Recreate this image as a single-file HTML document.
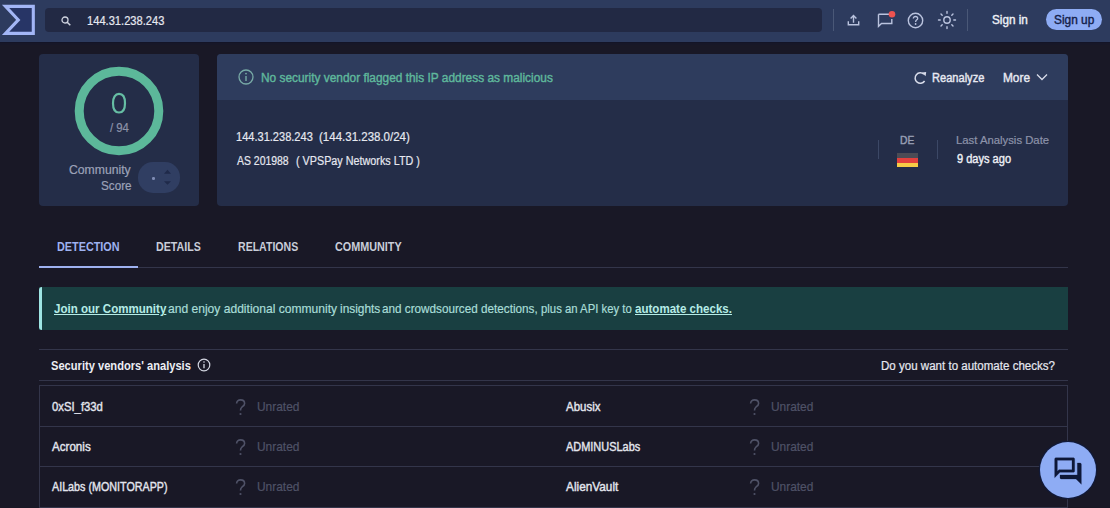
<!DOCTYPE html>
<html><head><meta charset="utf-8"><style>
html,body{margin:0;padding:0;width:1110px;height:508px;overflow:hidden;background:#191826;font-family:"Liberation Sans",sans-serif;}
.abs{position:absolute;}
.t{position:absolute;white-space:pre;transform-origin:0 0;}
</style></head><body>
<div class="abs" style="left:0;top:0;width:1110px;height:42px;background:#2d3b5e"></div>
<div class="abs" style="left:0;top:42px;width:1110px;height:1px;background:#131427"></div>
<div class="abs" style="left:0;top:43px;width:1110px;height:2px;background:#171728"></div>
<svg class="abs" style="left:0;top:0" width="40" height="42" viewBox="0 0 40 42">
  <path d="M5.5 6.4 L33.3 6.4 L33.3 33.4 L5.5 33.4 L18.3 19.9 Z" fill="#273566" stroke="#a3b6f6" stroke-width="3.1" stroke-linejoin="miter" stroke-miterlimit="6"/>
</svg>
<div class="abs" style="left:44.5px;top:7.6px;width:777px;height:24.8px;background:#222944;border-radius:4px"></div>
<svg class="abs" style="left:60px;top:15px" width="12" height="12" viewBox="0 0 12 12"><circle cx="5" cy="5" r="3" fill="none" stroke="#d0d4e0" stroke-width="1.3"/><path d="M7.2 7.2 L10.3 10.3" stroke="#d0d4e0" stroke-width="1.5"/></svg>
<div class="abs" style="left:833px;top:9px;width:1px;height:22px;background:#4a5877"></div>
<div class="abs" style="left:967px;top:9px;width:1px;height:22px;background:#4a5877"></div>
<!-- upload -->
<svg class="abs" style="left:846px;top:13px" width="15" height="14" viewBox="0 0 15 14"><path d="M2.3 8.2 V11.8 H12.7 V8.2" fill="none" stroke="#bac3de" stroke-width="1.4"/><path d="M7.5 9.8 V2.6 M4.6 5.4 L7.5 2.5 L10.4 5.4" fill="none" stroke="#bac3de" stroke-width="1.4"/></svg>
<!-- chat with dot -->
<svg class="abs" style="left:876px;top:9.5px" width="22" height="18" viewBox="0 0 22 18"><path d="M2.5 4.2 H13 M15.8 9 V13.5 H5.5 L2.5 16.3 V4.2" fill="none" stroke="#bac3de" stroke-width="1.4"/><circle cx="16" cy="4.2" r="3.3" fill="#ef5350"/></svg>
<!-- help -->
<svg class="abs" style="left:907px;top:12px" width="17" height="17" viewBox="0 0 17 17"><circle cx="8.5" cy="8.5" r="7.2" fill="none" stroke="#bac3de" stroke-width="1.4"/><path d="M6.3 6.6 C6.3 5.2 7.3 4.5 8.5 4.5 C9.8 4.5 10.7 5.3 10.7 6.4 C10.7 7.8 8.6 8 8.6 9.9" fill="none" stroke="#bac3de" stroke-width="1.3"/><circle cx="8.6" cy="12" r="0.9" fill="#bac3de"/></svg>
<!-- sun -->
<svg class="abs" style="left:937px;top:10px" width="20" height="20" viewBox="0 0 20 20"><circle cx="10" cy="10" r="3.2" fill="none" stroke="#bac3de" stroke-width="1.4"/><g stroke="#bac3de" stroke-width="1.4" stroke-linecap="round"><path d="M10 1.5V3.2M10 16.8V18.5M1.5 10H3.2M16.8 10H18.5M4 4L5.2 5.2M14.8 14.8L16 16M4 16L5.2 14.8M14.8 5.2L16 4"/></g></svg>
<div class="abs" style="left:1046px;top:9px;width:56px;height:21px;border-radius:11px;background:#8eacf4"></div>

<!-- left card -->
<div class="abs" style="left:39px;top:54px;width:160px;height:151.5px;background:#242d48;border-radius:4px"></div>
<svg class="abs" style="left:70px;top:62px" width="98" height="98" viewBox="0 0 98 98"><circle cx="49" cy="49" r="39.8" fill="none" stroke="#5cb89a" stroke-width="9"/><path d="M49 31.900000000000002 C52.72 31.900000000000002 55.0 35.43 55.0 41.2 C55.0 46.97 52.72 50.5 49 50.5 C45.28 50.5 43.0 46.97 43.0 41.2 C43.0 35.43 45.28 31.900000000000002 49 31.900000000000002 Z" fill="none" stroke="#66bea4" stroke-width="2.2"/></svg>
<div class="abs" style="left:137.5px;top:162.3px;width:42.5px;height:30.3px;border-radius:15px;background:#303e62"></div>
<div class="abs" style="left:152px;top:177.3px;width:2.6px;height:2.6px;border-radius:50%;background:#7f8db5"></div>
<svg class="abs" style="left:162px;top:166px" width="11" height="22" viewBox="0 0 11 22"><path d="M2 7.7 L5.5 3.8 L9 7.7 Z M2 15.2 L5.5 18.8 L9 15.2 Z" fill="#1f2a4a"/></svg>

<!-- right card -->
<div class="abs" style="left:217px;top:54px;width:851px;height:151.5px;background:#242d48;border-radius:4px;overflow:hidden"><div style="height:45.7px;background:#2e3c5d"></div></div>
<svg class="abs" style="left:238px;top:69px" width="16" height="16" viewBox="0 0 16 16"><circle cx="8" cy="8" r="7" fill="none" stroke="#78aaa6" stroke-width="1.3"/><path d="M8 7V12" stroke="#78aaa6" stroke-width="1.4"/><circle cx="8" cy="4.6" r="0.9" fill="#78aaa6"/></svg>
<svg class="abs" style="left:912px;top:70px" width="16" height="16" viewBox="0 0 16 16"><path d="M11.9 4.3 A5.2 5.2 0 1 0 12.6 11" fill="none" stroke="#d8dcea" stroke-width="1.5"/><path d="M10 2.6 L14.2 1.9 L13.6 6.3 Z" fill="#d8dcea"/></svg>
<svg class="abs" style="left:1036px;top:73px" width="12" height="9" viewBox="0 0 12 9"><path d="M1 1.5 L6 6.5 L11 1.5" fill="none" stroke="#d8dcea" stroke-width="1.3"/></svg>
<div class="abs" style="left:877.5px;top:140px;width:1px;height:19px;background:#3c4866"></div>
<div class="abs" style="left:936.5px;top:140px;width:1px;height:19px;background:#3c4866"></div>
<div class="abs" style="left:897px;top:153px;width:21px;height:5px;background:#4b4b55"></div>
<div class="abs" style="left:897px;top:158px;width:21px;height:4.5px;background:#e2403d"></div>
<div class="abs" style="left:897px;top:162.5px;width:21px;height:4.5px;background:#f6cc46"></div>

<!-- tabs -->
<div class="abs" style="left:39px;top:267px;width:1029px;height:1px;background:#33354a"></div>
<div class="abs" style="left:39px;top:265.5px;width:99px;height:2.5px;background:#9eb1f0"></div>

<!-- banner -->
<div class="abs" style="left:39px;top:287px;width:1029px;height:43px;background:#193f41"></div>
<div class="abs" style="left:39px;top:287px;width:3.2px;height:43.3px;background:#9ee5e3;border-radius:3px 0 0 3px"></div>

<!-- table header -->
<div class="abs" style="left:39px;top:349px;width:1029px;height:1px;background:#33354a"></div>
<div class="abs" style="left:39px;top:380px;width:1029px;height:1px;background:#33354a"></div>
<svg class="abs" style="left:197px;top:358px" width="14" height="14" viewBox="0 0 14 14"><circle cx="7" cy="7" r="5.8" fill="none" stroke="#d4d7e2" stroke-width="1.2"/><path d="M7 6V10.2" stroke="#d4d7e2" stroke-width="1.3"/><circle cx="7" cy="4" r="0.8" fill="#d4d7e2"/></svg>

<!-- table -->
<div class="abs" style="left:39px;top:385px;width:1027px;height:121px;border:1px solid #33354a"></div>
<div class="abs" style="left:39px;top:426px;width:1029px;height:1px;background:#33354a"></div>
<div class="abs" style="left:39px;top:466px;width:1029px;height:1px;background:#33354a"></div>
<svg class="abs" style="left:235px;top:398.5px" width="12" height="17" viewBox="0 0 12 17"><path d="M1.6 4.6 C1.6 2.4 3.3 0.9 5.5 0.9 C7.8 0.9 9.6 2.3 9.6 4.4 C9.6 6.3 8.2 7.1 7 8 C6 8.8 5.5 9.5 5.5 11.6" fill="none" stroke="#4f5267" stroke-width="1.6"/><circle cx="5.5" cy="15" r="1.1" fill="#4f5267"/></svg><svg class="abs" style="left:748.8px;top:398.5px" width="12" height="17" viewBox="0 0 12 17"><path d="M1.6 4.6 C1.6 2.4 3.3 0.9 5.5 0.9 C7.8 0.9 9.6 2.3 9.6 4.4 C9.6 6.3 8.2 7.1 7 8 C6 8.8 5.5 9.5 5.5 11.6" fill="none" stroke="#4f5267" stroke-width="1.6"/><circle cx="5.5" cy="15" r="1.1" fill="#4f5267"/></svg><svg class="abs" style="left:235px;top:439px" width="12" height="17" viewBox="0 0 12 17"><path d="M1.6 4.6 C1.6 2.4 3.3 0.9 5.5 0.9 C7.8 0.9 9.6 2.3 9.6 4.4 C9.6 6.3 8.2 7.1 7 8 C6 8.8 5.5 9.5 5.5 11.6" fill="none" stroke="#4f5267" stroke-width="1.6"/><circle cx="5.5" cy="15" r="1.1" fill="#4f5267"/></svg><svg class="abs" style="left:748.8px;top:439px" width="12" height="17" viewBox="0 0 12 17"><path d="M1.6 4.6 C1.6 2.4 3.3 0.9 5.5 0.9 C7.8 0.9 9.6 2.3 9.6 4.4 C9.6 6.3 8.2 7.1 7 8 C6 8.8 5.5 9.5 5.5 11.6" fill="none" stroke="#4f5267" stroke-width="1.6"/><circle cx="5.5" cy="15" r="1.1" fill="#4f5267"/></svg><svg class="abs" style="left:235px;top:479px" width="12" height="17" viewBox="0 0 12 17"><path d="M1.6 4.6 C1.6 2.4 3.3 0.9 5.5 0.9 C7.8 0.9 9.6 2.3 9.6 4.4 C9.6 6.3 8.2 7.1 7 8 C6 8.8 5.5 9.5 5.5 11.6" fill="none" stroke="#4f5267" stroke-width="1.6"/><circle cx="5.5" cy="15" r="1.1" fill="#4f5267"/></svg><svg class="abs" style="left:748.8px;top:479px" width="12" height="17" viewBox="0 0 12 17"><path d="M1.6 4.6 C1.6 2.4 3.3 0.9 5.5 0.9 C7.8 0.9 9.6 2.3 9.6 4.4 C9.6 6.3 8.2 7.1 7 8 C6 8.8 5.5 9.5 5.5 11.6" fill="none" stroke="#4f5267" stroke-width="1.6"/><circle cx="5.5" cy="15" r="1.1" fill="#4f5267"/></svg>

<!-- chat fab -->
<div class="abs" style="left:1039.5px;top:441.5px;width:56.5px;height:56.5px;border-radius:50%;background:#8eacf4;box-shadow:0 0 0 1.2px #111a3a"></div>
<svg class="abs" style="left:1051.5px;top:454.5px" width="32" height="32" viewBox="0 0 24 24"><path fill="#0e1838" stroke="#0e1838" stroke-width="0.2" d="M15 4v7H5.17L4 12.17V4h11m1-2H3c-.55 0-1 .45-1 1v14l4-4h10c.55 0 1-.45 1-1V3c0-.55-.45-1-1-1zm5 4h-2v9H6v2c0 .55.45 1 1 1h11l4 4V7c0-.55-.45-1-1-1z"/></svg>

<span class="t" style="left:87.31px;top:14.50px;font-size:12.5px;line-height:12.5px;font-weight:400;color:#e6e8f0;transform:scaleX(0.8907);-webkit-text-stroke:0.2px #e6e8f0;">144.31.238.243</span>
<span class="t" style="left:991.66px;top:14.30px;font-size:12.5px;line-height:12.5px;font-weight:400;color:#eef0f6;transform:scaleX(0.9378);-webkit-text-stroke:0.4px #eef0f6;">Sign in</span>
<span class="t" style="left:1053.75px;top:14.30px;font-size:12.5px;line-height:12.5px;font-weight:400;color:#14204a;transform:scaleX(0.9488);-webkit-text-stroke:0.4px #14204a;">Sign up</span>
<span class="t" style="left:109.60px;top:122.00px;font-size:12px;line-height:12px;font-weight:400;color:#8d93a8;transform:scaleX(0.9450);-webkit-text-stroke:0.2px #8d93a8;">/ 94</span>
<span class="t" style="left:69.28px;top:164.00px;font-size:12px;line-height:12px;font-weight:400;color:#9ca2b8;transform:scaleX(1.0167);-webkit-text-stroke:0.2px #9ca2b8;">Community</span>
<span class="t" style="left:101.02px;top:180.00px;font-size:12px;line-height:12px;font-weight:400;color:#9ca2b8;transform:scaleX(0.9767);-webkit-text-stroke:0.2px #9ca2b8;">Score</span>
<span class="t" style="left:261.05px;top:71.60px;font-size:12.5px;line-height:12.5px;font-weight:400;color:#5fb89c;transform:scaleX(0.9510);-webkit-text-stroke:0.4px #5fb89c;">No security vendor flagged this IP address as malicious</span>
<span class="t" style="left:931.61px;top:71.70px;font-size:12.5px;line-height:12.5px;font-weight:400;color:#e8eaf2;transform:scaleX(0.8862);-webkit-text-stroke:0.4px #e8eaf2;">Reanalyze</span>
<span class="t" style="left:1002.85px;top:71.70px;font-size:12.5px;line-height:12.5px;font-weight:400;color:#e8eaf2;transform:scaleX(0.9481);-webkit-text-stroke:0.4px #e8eaf2;">More</span>
<span class="t" style="left:236.32px;top:131.30px;font-size:12.5px;line-height:12.5px;font-weight:400;color:#e6e8f0;transform:scaleX(0.8837);-webkit-text-stroke:0.2px #e6e8f0;">144.31.238.243</span>
<span class="t" style="left:319.08px;top:131.30px;font-size:12.5px;line-height:12.5px;font-weight:400;color:#e6e8f0;transform:scaleX(0.9206);-webkit-text-stroke:0.2px #e6e8f0;">(144.31.238.0/24)</span>
<span class="t" style="left:237.20px;top:155.40px;font-size:12.5px;line-height:12.5px;font-weight:400;color:#e6e8f0;transform:scaleX(0.8355);-webkit-text-stroke:0.2px #e6e8f0;">AS 201988</span>
<span class="t" style="left:295.84px;top:155.40px;font-size:12.5px;line-height:12.5px;font-weight:400;color:#e6e8f0;transform:scaleX(0.8627);-webkit-text-stroke:0.2px #e6e8f0;">( VPSPay Networks LTD )</span>
<span class="t" style="left:899.91px;top:135.20px;font-size:11.5px;line-height:11.5px;font-weight:400;color:#9aa0b6;transform:scaleX(0.8933);-webkit-text-stroke:0.4px #9aa0b6;">DE</span>
<span class="t" style="left:955.52px;top:135.20px;font-size:11.5px;line-height:11.5px;font-weight:400;color:#8d93aa;transform:scaleX(0.9839);-webkit-text-stroke:0.2px #8d93aa;">Last Analysis Date</span>
<span class="t" style="left:956.50px;top:152.70px;font-size:12.5px;line-height:12.5px;font-weight:400;color:#eef0f6;transform:scaleX(0.8836);-webkit-text-stroke:0.4px #eef0f6;">9 days ago</span>
<span class="t" style="left:57.27px;top:240.00px;font-size:13px;line-height:13px;font-weight:700;color:#9eb1f0;transform:scaleX(0.8329);-webkit-text-stroke:0px #9eb1f0;">DETECTION</span>
<span class="t" style="left:156.38px;top:240.00px;font-size:13px;line-height:13px;font-weight:700;color:#c9cdd9;transform:scaleX(0.8189);-webkit-text-stroke:0px #c9cdd9;">DETAILS</span>
<span class="t" style="left:237.69px;top:240.00px;font-size:13px;line-height:13px;font-weight:700;color:#c9cdd9;transform:scaleX(0.8123);-webkit-text-stroke:0px #c9cdd9;">RELATIONS</span>
<span class="t" style="left:334.87px;top:240.00px;font-size:13px;line-height:13px;font-weight:700;color:#c9cdd9;transform:scaleX(0.8316);-webkit-text-stroke:0px #c9cdd9;">COMMUNITY</span>
<span class="t" style="left:53.91px;top:302.30px;font-size:13px;line-height:13px;font-weight:700;color:#b5ece6;transform:scaleX(0.8888);-webkit-text-stroke:0px #b5ece6;text-decoration:underline;">Join our Community</span>
<span class="t" style="left:167.97px;top:302.30px;font-size:13px;line-height:13px;font-weight:400;color:#a8ddd7;transform:scaleX(0.9287);-webkit-text-stroke:0.2px #a8ddd7;">and enjoy additional community</span>
<span class="t" style="left:339.99px;top:302.30px;font-size:13px;line-height:13px;font-weight:400;color:#a8ddd7;transform:scaleX(0.9140);-webkit-text-stroke:0.2px #a8ddd7;">insights</span>
<span class="t" style="left:382.40px;top:302.30px;font-size:13px;line-height:13px;font-weight:400;color:#a8ddd7;transform:scaleX(0.9012);-webkit-text-stroke:0.2px #a8ddd7;">and crowdsourced detections,</span>
<span class="t" style="left:540.73px;top:302.30px;font-size:13px;line-height:13px;font-weight:400;color:#a8ddd7;transform:scaleX(0.8728);-webkit-text-stroke:0.2px #a8ddd7;">plus an API key to</span>
<span class="t" style="left:634.80px;top:302.30px;font-size:13px;line-height:13px;font-weight:700;color:#b5ece6;transform:scaleX(0.8889);-webkit-text-stroke:0px #b5ece6;text-decoration:underline;">automate checks.</span>
<span class="t" style="left:50.84px;top:359.00px;font-size:13px;line-height:13px;font-weight:700;color:#eceef4;transform:scaleX(0.8556);-webkit-text-stroke:0px #eceef4;">Security vendors' analysis</span>
<span class="t" style="left:881.08px;top:359.60px;font-size:12.5px;line-height:12.5px;font-weight:400;color:#e6e8f0;transform:scaleX(0.9241);-webkit-text-stroke:0.2px #e6e8f0;">Do you want to automate checks?</span>
<span class="t" style="left:52.20px;top:399.50px;font-size:13px;line-height:13px;font-weight:400;color:#e4e6ee;transform:scaleX(0.8690);-webkit-text-stroke:0.4px #e4e6ee;">0xSI_f33d</span>
<span class="t" style="left:565.60px;top:399.50px;font-size:13px;line-height:13px;font-weight:400;color:#e4e6ee;transform:scaleX(0.8821);-webkit-text-stroke:0.4px #e4e6ee;">Abusix</span>
<span class="t" style="left:256.78px;top:399.50px;font-size:13px;line-height:13px;font-weight:400;color:#4f5267;transform:scaleX(0.9178);-webkit-text-stroke:0.2px #4f5267;">Unrated</span>
<span class="t" style="left:770.68px;top:399.50px;font-size:13px;line-height:13px;font-weight:400;color:#4f5267;transform:scaleX(0.9156);-webkit-text-stroke:0.2px #4f5267;">Unrated</span>
<span class="t" style="left:52.20px;top:440.00px;font-size:13px;line-height:13px;font-weight:400;color:#e4e6ee;transform:scaleX(0.8930);-webkit-text-stroke:0.4px #e4e6ee;">Acronis</span>
<span class="t" style="left:565.60px;top:440.00px;font-size:13px;line-height:13px;font-weight:400;color:#e4e6ee;transform:scaleX(0.8420);-webkit-text-stroke:0.4px #e4e6ee;">ADMINUSLabs</span>
<span class="t" style="left:256.78px;top:440.00px;font-size:13px;line-height:13px;font-weight:400;color:#4f5267;transform:scaleX(0.9178);-webkit-text-stroke:0.2px #4f5267;">Unrated</span>
<span class="t" style="left:770.68px;top:440.00px;font-size:13px;line-height:13px;font-weight:400;color:#4f5267;transform:scaleX(0.9156);-webkit-text-stroke:0.2px #4f5267;">Unrated</span>
<span class="t" style="left:52.20px;top:480.00px;font-size:13px;line-height:13px;font-weight:400;color:#e4e6ee;transform:scaleX(0.8259);-webkit-text-stroke:0.4px #e4e6ee;">AILabs (MONITORAPP)</span>
<span class="t" style="left:565.60px;top:480.00px;font-size:13px;line-height:13px;font-weight:400;color:#e4e6ee;transform:scaleX(0.9086);-webkit-text-stroke:0.4px #e4e6ee;">AlienVault</span>
<span class="t" style="left:256.78px;top:480.00px;font-size:13px;line-height:13px;font-weight:400;color:#4f5267;transform:scaleX(0.9178);-webkit-text-stroke:0.2px #4f5267;">Unrated</span>
<span class="t" style="left:770.68px;top:480.00px;font-size:13px;line-height:13px;font-weight:400;color:#4f5267;transform:scaleX(0.9156);-webkit-text-stroke:0.2px #4f5267;">Unrated</span>
</body></html>
